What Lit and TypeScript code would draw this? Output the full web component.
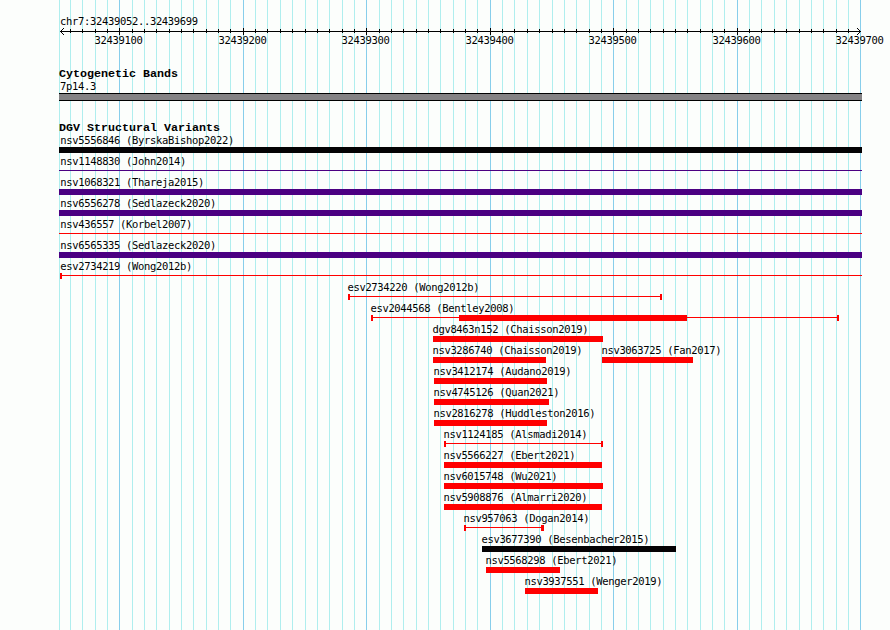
import {LitElement, html, svg, css, nothing} from 'lit';
import {customElement, property} from 'lit/decorators.js';
import {styleMap} from 'lit/directives/style-map.js';

interface IFeature {
    name: string;
    start: number;
    end: number;
    color?: string;
    kind?: 'bar' | 'line' | 'range';
    // solid part of a range
    thick?: [number, number];
    leftCap?: number;
    rightCap?: number;
    labelShift?: number;
}

const RED = '#ff0000';
const INDIGO = '#4b0082';
const BLACK = '#040204';

const LEFT = 59;
const RIGHT = 862;
const REGION_START = 32439052;
const REGION_END = 32439699;
const PX_PER_BASE = 1.235;

const toX = (base: number) => Math.round(60 + (base - REGION_START) * PX_PER_BASE);

const TICKS: number[] = [];
for (let base = 32439060; base <= 32439700; base += 10) {
    TICKS.push(base);
}

const full = (name: string, color: string, kind: 'bar' | 'line' = 'bar'): IFeature =>
    ({name, start: LEFT, end: RIGHT, color, kind, labelShift: 1.2});

const ROWS: IFeature[][] = [
    [full('nsv5556846 (ByrskaBishop2022)', BLACK)],
    [full('nsv1148830 (John2014)', INDIGO, 'line')],
    [full('nsv1068321 (Thareja2015)', INDIGO)],
    [full('nsv6556278 (Sedlazeck2020)', INDIGO)],
    [full('nsv436557 (Korbel2007)', RED, 'line')],
    [full('nsv6565335 (Sedlazeck2020)', INDIGO)],
    [{name: 'esv2734219 (Wong2012b)', start: 60, end: RIGHT, kind: 'range', rightCap: 0, labelShift: 0.2}],
    [{name: 'esv2734220 (Wong2012b)', start: 348, end: 662, kind: 'range'}],
    [{name: 'esv2044568 (Bentley2008)', start: 371, end: 839, kind: 'range', thick: [459, 687]}],
    [{name: 'dgv8463n152 (Chaisson2019)', start: 433, end: 603}],
    [
        {name: 'nsv3286740 (Chaisson2019)', start: 433, end: 546},
        {name: 'nsv3063725 (Fan2017)', start: 602, end: 693},
    ],
    [{name: 'nsv3412174 (Audano2019)', start: 434, end: 547}],
    [{name: 'nsv4745126 (Quan2021)', start: 434, end: 549}],
    [{name: 'nsv2816278 (Huddleston2016)', start: 434, end: 547}],
    [{name: 'nsv1124185 (Alsmadi2014)', start: 444, end: 603, kind: 'range'}],
    [{name: 'nsv5566227 (Ebert2021)', start: 444, end: 602}],
    [{name: 'nsv6015748 (Wu2021)', start: 444, end: 603}],
    [{name: 'nsv5908876 (Almarri2020)', start: 444, end: 602}],
    [{name: 'nsv957063 (Dogan2014)', start: 464, end: 544, kind: 'range', rightCap: 3}],
    [{name: 'esv3677390 (Besenbacher2015)', start: 482, end: 676, color: BLACK}],
    [{name: 'nsv5568298 (Ebert2021)', start: 486, end: 560}],
    [{name: 'nsv3937551 (Wenger2019)', start: 525, end: 598}],
];

@customElement('track-feature')
export class TrackFeature extends LitElement {
    static override styles = css`
        :host {
            display: block;
            flex: none;
            height: 21px;
        }

        .label {
            height: 15px;
            line-height: 17px;
            white-space: nowrap;
        }

        svg {
            display: block;
            shape-rendering: crispEdges;
        }
    `

    @property({attribute: false}) feature!: IFeature;

    override render() {
        const {name, start, end, color = RED, kind = 'bar', thick, leftCap = 2, rightCap = 2, labelShift = -0.6} = this.feature;
        const width = end - start;
        return html`
            <div class="label" style=${styleMap({marginLeft: `${labelShift}px`})}>${name}</div>
            <svg width=${width} height="6" fill=${color}>
                <rect y=${kind === 'bar' ? 0 : 2} width=${width} height=${kind === 'bar' ? 6 : 1}></rect>
                ${kind === 'range' ? svg`
                    <rect width=${leftCap} height="6"></rect>
                    <rect x=${width - rightCap} width=${rightCap} height="6"></rect>
                ` : nothing}
                ${thick ? svg`<rect x=${thick[0] - start} width=${thick[1] - thick[0]} height="6"></rect>` : nothing}
            </svg>
        `;
    }
}

@customElement('coordinate-ruler')
export class CoordinateRuler extends LitElement {
    static override styles = css`
        :host {
            display: block;
        }

        svg {
            display: block;
        }

        .axis {
            shape-rendering: crispEdges;
        }
    `

    override render() {
        return html`
            <svg width="890" height="22" fill="#000">
                <g class="axis">
                    <rect x="60" y="4" width="801" height="1"></rect>
                    ${TICKS.slice(0, -1).map(base => base % 100 === 0
                        ? svg`<rect x=${toX(base)} y="1" width="1" height="7"></rect>`
                        : svg`<rect x=${toX(base)} y="2" width="1" height="4"></rect>`)}
                    ${[1, 2, 3].map(i => svg`
                        <rect x=${60 + i} y=${4 - i} width="1" height="1"></rect>
                        <rect x=${60 + i} y=${4 + i} width="1" height="1"></rect>
                        <rect x=${860 - i} y=${4 - i} width="1" height="1"></rect>
                        <rect x=${860 - i} y=${4 + i} width="1" height="1"></rect>
                    `)}
                </g>
                ${TICKS.filter(base => base % 100 === 0).map(base => svg`
                    <text x=${toX(base) - 24.5} y="17">${base}</text>
                `)}
            </svg>
        `;
    }
}

@customElement('app-root')
export class AppRoot extends LitElement {
    static override styles = css`
        :host {
            display: block;
            position: relative;
            box-sizing: border-box;
            width: 890px;
            height: 630px;
            padding-top: 13px;
            overflow: hidden;
            background: #fcfefc;
            color: #000;
            font-family: "DejaVu Sans Mono", monospace;
            font-size: 10.5px;
            letter-spacing: -0.33px;
        }

        .grid {
            position: absolute;
            inset: 0;
            shape-rendering: crispEdges;
        }

        main {
            position: relative;
        }

        .region {
            height: 14px;
            line-height: 17px;
            padding-left: 60px;
        }

        h2 {
            margin: 0;
            height: 14px;
            line-height: 14px;
            padding-left: 59px;
            font-family: "Liberation Mono", monospace;
            font-size: 11.67px;
            font-weight: bold;
            letter-spacing: 0;
            white-space: nowrap;
        }

        .cytogenetic {
            padding-top: 18px;
        }

        .band-label {
            height: 12px;
            line-height: 11px;
            padding-left: 60px;
        }

        .band {
            box-sizing: border-box;
            width: 803px;
            height: 8px;
            margin-left: 59px;
            border: solid #000;
            border-width: 1px 0;
            background: #848284;
        }

        .variants {
            padding-top: 20px;
        }

        .row {
            display: flex;
            height: 21px;
        }

        .variants h2 {
            height: 11px;
        }
    `

    renderGrid() {
        return html`
            <svg class="grid" width="890" height="630">
                <rect x=${LEFT} width="1" height="630" fill="#afeeee"></rect>
                ${TICKS.map(base => svg`
                    <rect x=${toX(base)} width="1" height="630" fill=${base % 100 === 0 ? '#87ceeb' : '#afeeee'}></rect>
                `)}
            </svg>
        `;
    }

    renderRow(row: IFeature[]) {
        return html`
            <div class="row">
                ${row.map((feature, i) => html`
                    <track-feature
                        .feature=${feature}
                        style=${styleMap({
                            marginLeft: `${feature.start - (i ? row[i - 1].end : 0)}px`,
                            width: `${feature.end - feature.start}px`,
                        })}
                    ></track-feature>
                `)}
            </div>
        `;
    }

    override render() {
        return html`
            ${this.renderGrid()}
            <main>
                <div class="region">chr7:${REGION_START}..${REGION_END}</div>
                <coordinate-ruler></coordinate-ruler>
                <section class="cytogenetic">
                    <h2>Cytogenetic Bands</h2>
                    <div class="band-label">7p14.3</div>
                    <div class="band"></div>
                </section>
                <section class="variants">
                    <h2>DGV Structural Variants</h2>
                    ${ROWS.map(row => this.renderRow(row))}
                </section>
            </main>
        `;
    }
}

declare global {
    interface HTMLElementTagNameMap {
        'app-root': AppRoot;
        'coordinate-ruler': CoordinateRuler;
        'track-feature': TrackFeature;
    }
}
